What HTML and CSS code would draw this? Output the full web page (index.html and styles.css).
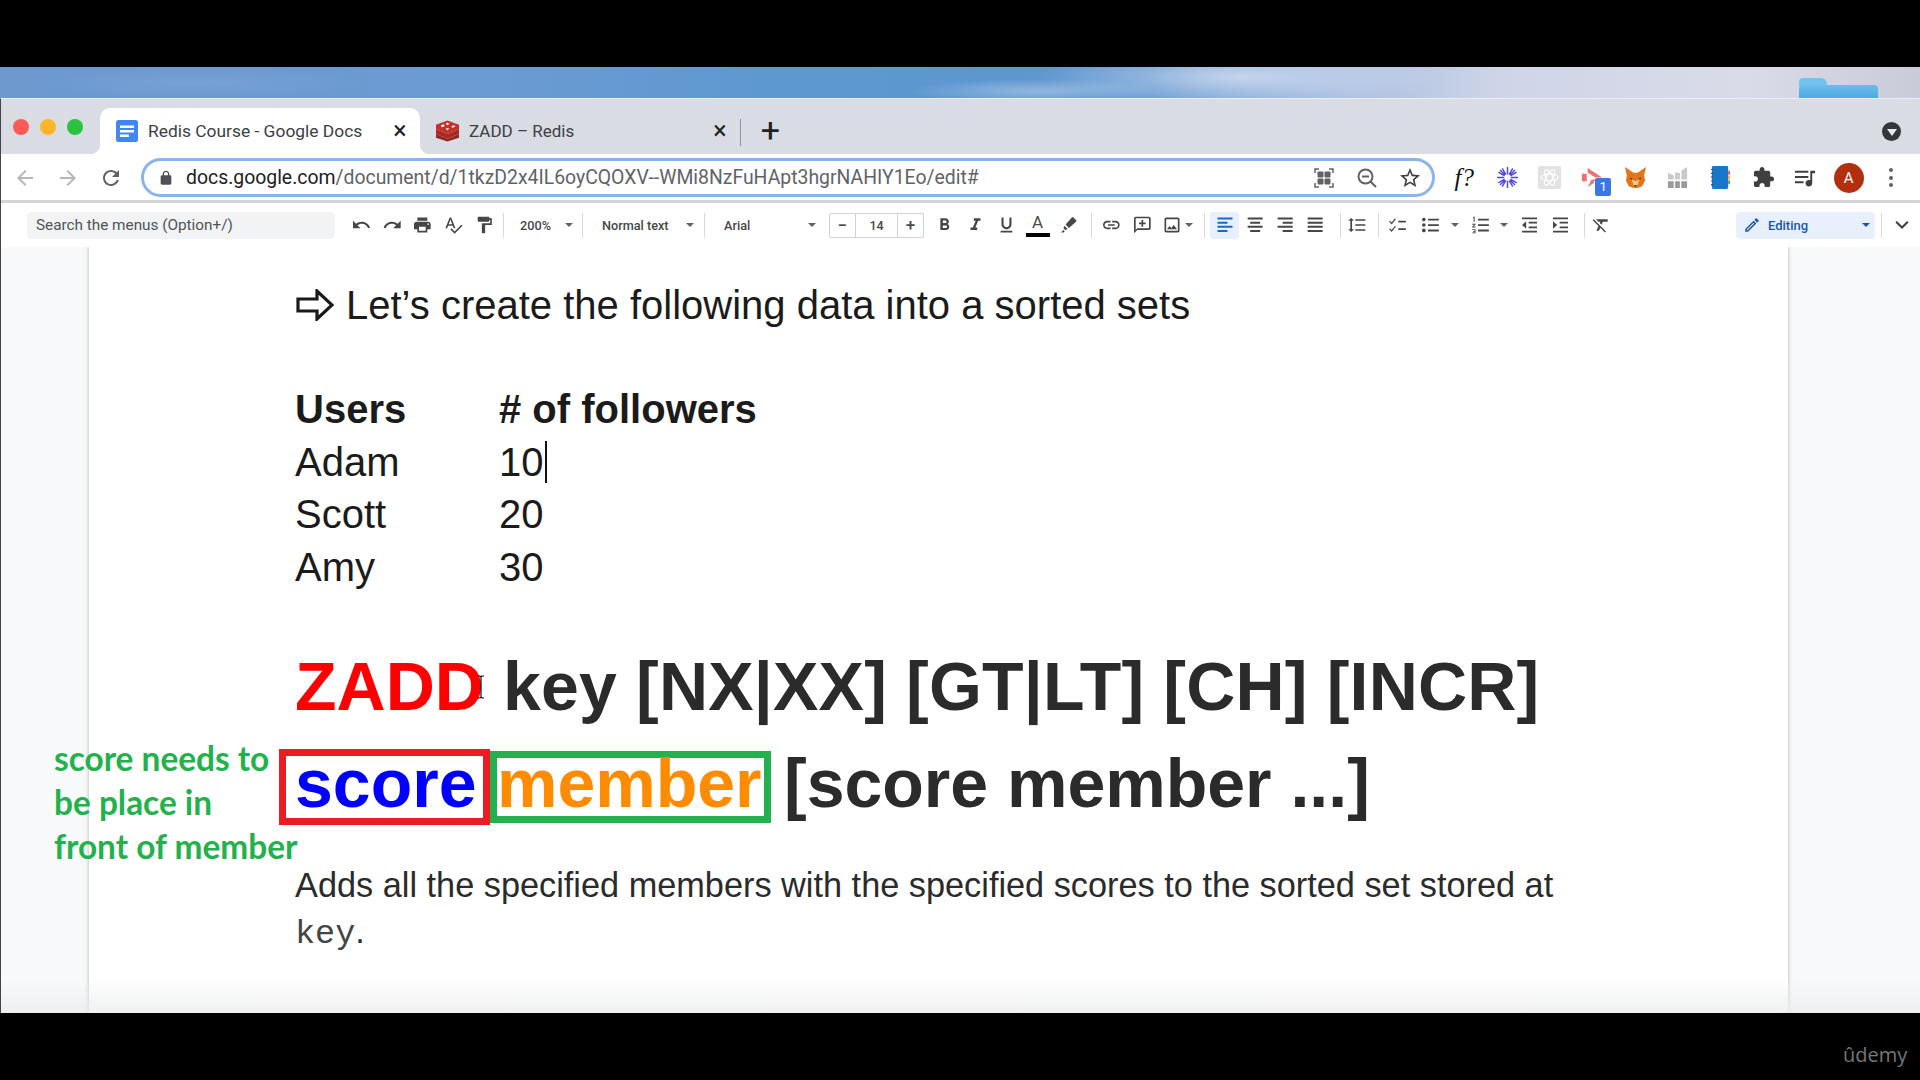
FILE: index.html
```html
<!DOCTYPE html>
<html>

<head>
    <meta charset="UTF-8">
    <title>Redis Course - Google Docs</title>
    <link rel="stylesheet" href="styles.css">
</head>

<body>
    <svg class="defs" width="0" height="0">
        <symbol id="i-back" viewBox="0 0 24 24"><path d="M20 11H7.83l5.59-5.59L12 4l-8 8 8 8 1.41-1.41L7.83 13H20v-2z"/></symbol>
        <symbol id="i-forward" viewBox="0 0 24 24"><path d="M4 11h12.17l-5.59-5.59L12 4l8 8-8 8-1.41-1.41L16.17 13H4v-2z"/></symbol>
        <symbol id="i-reload" viewBox="0 0 24 24"><path d="M17.65 6.35C16.2 4.9 14.21 4 12 4c-4.42 0-7.99 3.58-7.99 8s3.57 8 7.99 8c3.73 0 6.84-2.55 7.73-6h-2.08c-.82 2.33-3.04 4-5.65 4-3.31 0-6-2.69-6-6s2.69-6 6-6c1.66 0 3.14.69 4.22 1.78L13 11h7V4l-2.35 2.35z"/></symbol>
        <symbol id="i-lock" viewBox="0 0 24 24"><path d="M18 8h-1V6c0-2.76-2.24-5-5-5S7 3.24 7 6v2H6c-1.1 0-2 .9-2 2v10c0 1.1.9 2 2 2h12c1.1 0 2-.9 2-2V10c0-1.1-.9-2-2-2zM9 6c0-1.66 1.34-3 3-3s3 1.34 3 3v2H9V6z"/></symbol>
        <symbol id="i-star" viewBox="0 0 24 24"><path d="M22 9.24l-7.19-.62L12 2 9.19 8.63 2 9.24l5.46 4.73L5.82 21 12 17.27 18.18 21l-1.63-7.03L22 9.24zM12 15.4l-3.76 2.27 1-4.28-3.32-2.88 4.38-.38L12 6.1l1.71 4.04 4.38.38-3.32 2.88 1 4.28L12 15.4z"/></symbol>
        <symbol id="i-undo" viewBox="0 0 24 24"><path d="M12.5 8c-2.65 0-5.05.99-6.9 2.6L2 7v9h9l-3.62-3.62c1.39-1.16 3.16-1.88 5.12-1.88 3.54 0 6.55 2.31 7.6 5.5l2.37-.78C21.08 11.03 17.15 8 12.5 8z"/></symbol>
        <symbol id="i-redo" viewBox="0 0 24 24"><path d="M18.4 10.6C16.55 8.99 14.15 8 11.5 8c-4.65 0-8.58 3.03-9.96 7.22L3.9 16c1.05-3.19 4.05-5.5 7.6-5.5 1.95 0 3.73.72 5.12 1.88L13 16h9V7l-3.6 3.6z"/></symbol>
        <symbol id="i-print" viewBox="0 0 24 24"><path d="M19 8H5c-1.66 0-3 1.34-3 3v6h4v4h12v-4h4v-6c0-1.66-1.34-3-3-3zm-3 11H8v-5h8v5zm3-7c-.55 0-1-.45-1-1s.45-1 1-1 1 .45 1 1-.45 1-1 1zm-1-9H6v4h12V3z"/></symbol>
        <symbol id="i-spell" viewBox="0 0 24 24"><path d="M12.45 16h2.09L9.43 3H7.57L2.46 16h2.09l1.12-3h5.64l1.14 3zm-6.02-5L8.5 5.48 10.57 11H6.43zm15.16.59l-8.09 8.09L9.83 16l-1.41 1.41 5.09 5.09L23 13l-1.41-1.41z"/></symbol>
        <symbol id="i-paint" viewBox="0 0 24 24"><path d="M18 4V3c0-.55-.45-1-1-1H5c-.55 0-1 .45-1 1v4c0 .55.45 1 1 1h12c.55 0 1-.45 1-1V6h1v4H9v11c0 .55.45 1 1 1h2c.55 0 1-.45 1-1v-9h8V4h-3z"/></symbol>
        <symbol id="i-bold" viewBox="0 0 24 24"><path d="M15.6 10.79c.97-.67 1.65-1.77 1.65-2.79 0-2.26-1.75-4-4-4H7v14h7.04c2.09 0 3.71-1.7 3.71-3.79 0-1.52-.86-2.82-2.15-3.42zM10 6.5h3c.83 0 1.5.67 1.5 1.5s-.67 1.5-1.5 1.5h-3v-3zm3.5 9H10v-3h3.5c.83 0 1.5.67 1.5 1.5s-.67 1.5-1.5 1.5z"/></symbol>
        <symbol id="i-italic" viewBox="0 0 24 24"><path d="M10 4v3h2.21l-3.42 8H6v3h8v-3h-2.21l3.42-8H18V4z"/></symbol>
        <symbol id="i-underline" viewBox="0 0 24 24"><path d="M12 17c3.31 0 6-2.69 6-6V3h-2.5v8c0 1.93-1.57 3.5-3.5 3.5S8.5 12.93 8.5 11V3H6v8c0 3.31 2.69 6 6 6zm-7 2v2h14v-2H5z"/></symbol>
        <symbol id="i-pen" viewBox="0 0 24 24"><path d="M3 21l3-3 1.500 1.500-1.500 1.500zM7 13l4 4-3 1-2-2zM8.500 11.500L16 3c.6-.6 1.400-.6 2 0l3 3c.6.6.6 1.400 0 2l-8.500 7.500z"/></symbol>
        <symbol id="i-edit" viewBox="0 0 24 24"><path d="M3 17.25V21h3.75L17.81 9.94l-3.75-3.75L3 17.25zM5.9 19H5v-.9l9.06-9.06.9.9L5.9 19zM20.71 7.04c.39-.39.39-1.02 0-1.41l-2.34-2.34c-.39-.39-1.02-.39-1.41 0l-1.83 1.83 3.75 3.75 1.83-1.83z"/></symbol>
        <symbol id="i-link" viewBox="0 0 24 24"><path d="M3.9 12c0-1.71 1.39-3.1 3.1-3.1h4V7H7c-2.76 0-5 2.24-5 5s2.24 5 5 5h4v-1.9H7c-1.71 0-3.1-1.39-3.1-3.1zM8 13h8v-2H8v2zm9-6h-4v1.9h4c1.71 0 3.1 1.39 3.1 3.1s-1.39 3.1-3.1 3.1h-4V17h4c2.76 0 5-2.24 5-5s-2.24-5-5-5z"/></symbol>
        <symbol id="i-comment" viewBox="0 0 24 24"><path d="M20 2H4c-1.1 0-2 .9-2 2v18l4-4h14c1.1 0 2-.9 2-2V4c0-1.1-.9-2-2-2zm0 14H6l-2 2V4h16v12zM11 6h2v3h3v2h-3v3h-2v-3H8V9h3z"/></symbol>
        <symbol id="i-image" viewBox="0 0 24 24"><path d="M19 5v14H5V5h14m0-2H5c-1.1 0-2 .9-2 2v14c0 1.1.9 2 2 2h14c1.1 0 2-.9 2-2V5c0-1.1-.9-2-2-2zm-4.86 8.86l-3 3.87L9 13.14 6 17h12l-3.86-5.14z"/></symbol>
        <symbol id="i-left" viewBox="0 0 24 24"><path d="M3 3h18v2.4H3zM3 8h12v2.4H3zM3 13h18v2.4H3zM3 18h12v2.4H3z"/></symbol>
        <symbol id="i-center" viewBox="0 0 24 24"><path d="M3 3h18v2.4H3zM6 8h12v2.4H6zM3 13h18v2.4H3zM6 18h12v2.4H6z"/></symbol>
        <symbol id="i-right" viewBox="0 0 24 24"><path d="M3 3h18v2.4H3zM9 8h12v2.4H9zM3 13h18v2.4H3zM9 18h12v2.4H9z"/></symbol>
        <symbol id="i-justify" viewBox="0 0 24 24"><path d="M3 3h18v2.4H3zM3 8h18v2.4H3zM3 13h18v2.4H3zM3 18h18v2.4H3z"/></symbol>
        <symbol id="i-spacing" viewBox="0 0 24 24"><path d="M6 7h2.5L5 3.5 1.5 7H4v10H1.5L5 20.5 8.5 17H6V7zm4-2v2h12V5H10zm0 14h12v-2H10v2zm0-6h12v-2H10v2z"/></symbol>
        <symbol id="i-check" viewBox="0 0 24 24"><path d="M3 7l2 2 4-5 1 1-5 6.500L2 8zM3 16l2 2 4-5 1 1-5 6.500L2 17zM13 7h9v2h-9zM13 16h9v2h-9z"/></symbol>
        <symbol id="i-bullets" viewBox="0 0 24 24"><circle cx="4" cy="5.500" r="2.200"/><circle cx="4" cy="12" r="2.200"/><circle cx="4" cy="18.500" r="2.200"/><path d="M9 4.500h13v2.200H9zM9 11h13v2.200H9zM9 17.500h13v2.200H9z"/></symbol>
        <symbol id="i-numbers" viewBox="0 0 24 24"><path d="M9 4.500h13v2.200H9zM9 11h13v2.200H9zM9 17.500h13v2.200H9zM3 2h2v6H3.800V3.200H3zM2 10.500h4v1l-2.400 2.300H6V15H2v-1l2.400-2.300H2zM2 17h4v5H2v-1h2.800v-1H3v-.900h1.800v-1H2z"/></symbol>
        <symbol id="i-outdent" viewBox="0 0 24 24"><path d="M3 3h18v2.200H3zM3 18.800h18V21H3zM11 8h10v2.200H11zM11 13.800h10V16H11zM8 7.500v9L3 12z"/></symbol>
        <symbol id="i-indent" viewBox="0 0 24 24"><path d="M3 3h18v2.200H3zM3 18.800h18V21H3zM11 8h10v2.200H11zM11 13.800h10V16H11zM3 7.500v9L8 12z"/></symbol>
        <symbol id="i-clear" viewBox="0 0 24 24"><path d="M3.270 5L2 6.270l6.970 6.970L6.500 19h3l1.570-3.660L16.730 21 18 19.730 3.550 5.270 3.270 5zM6 5v.18L8.820 8h2.400l-.72 1.680 2.100 2.100L14.210 8H20V5H6z"/></symbol>
        <symbol id="i-puzzle" viewBox="0 0 24 24"><path d="M20.500 11H19V7c0-1.100-.9-2-2-2h-4V3.500C13 2.120 11.880 1 10.500 1S8 2.120 8 3.500V5H4c-1.100 0-1.990.9-1.990 2v3.800H3.500c1.490 0 2.700 1.210 2.700 2.700s-1.210 2.700-2.700 2.700H2V20c0 1.100.9 2 2 2h3.800v-1.500c0-1.490 1.210-2.700 2.700-2.700 1.490 0 2.700 1.210 2.700 2.700V22H17c1.100 0 2-.9 2-2v-4h1.500c1.380 0 2.500-1.120 2.500-2.500S21.880 11 20.500 11z"/></symbol>
    </svg>

    <div class="bar-top"></div>

    <div class="desktop">
        <div class="folder"></div>
    </div>

    <div class="browser">
        <div class="tabstrip">
            <div class="lights">
                <span class="light red"></span>
                <span class="light yellow"></span>
                <span class="light green"></span>
            </div>
            <div class="tab active">
                <svg class="favicon" viewBox="0 0 22 22"><rect x="0" y="0" width="22" height="22" rx="2.500" fill="#4285f4"/><path d="M4 5.500h14v2.500H4zM4 10h14v2.500H4zM4 14.500h9V17H4z" fill="#fff"/></svg>
                <span class="tab-title">Redis Course - Google Docs</span>
                <span class="tab-x">×</span>
            </div>
            <div class="tab">
                <svg class="favicon redis" viewBox="0 0 24 22"><path d="M0 14l12 5 12-5v4l-12 4-12-4z" fill="#912626"/><path d="M0 9l12 5 12-5v5l-12 5-12-5z" fill="#a82a25"/><path d="M0 4.500L12 0l12 4.500V9l-12 5L0 9z" fill="#c6302b"/><path d="M12 2l2 1.500-2 1.500-2-1.500zM5 5l3-1 1 2-3 1zM16 6l3-1 1 1.500-3 1zM10 8h4l-2 2.500z" fill="#fff"/></svg>
                <span class="tab-title">ZADD – Redis</span>
                <span class="tab-x">×</span>
            </div>
            <span class="tab-sep"></span>
            <span class="new-tab">+</span>
            <span class="tab-menu"><i></i></span>
        </div>

        <div class="addressbar">
            <svg class="nav dim"><use href="#i-back"/></svg>
            <svg class="nav dim"><use href="#i-forward"/></svg>
            <svg class="nav"><use href="#i-reload"/></svg>
            <div class="omnibox">
                <svg class="lock"><use href="#i-lock"/></svg>
                <span class="url"><b>docs.google.com</b>/document/d/1tkzD2x4IL6oyCQOXV--WMi8NzFuHApt3hgrNAHIY1Eo/edit#</span>
                <div class="omni-icons">
                    <svg class="omni-icon" viewBox="0 0 24 24"><path d="M3 7V3h4M17 3h4v4M21 17v4h-4M7 21H3v-4" fill="none" stroke="#5f6368" stroke-width="1.500"/><rect x="5.500" y="5.500" width="6" height="6" rx="1" fill="#5f6368"/><rect x="12.500" y="5.500" width="6" height="6" rx="1" fill="#5f6368"/><rect x="5.500" y="12.500" width="6" height="6" rx="1" fill="#5f6368"/><rect x="12.500" y="12.500" width="6" height="6" rx="1" fill="#5f6368"/></svg>
                    <svg class="omni-icon" viewBox="0 0 24 24"><circle cx="10.500" cy="10.500" r="7" fill="none" stroke="#5f6368" stroke-width="2"/><path d="M7 10.500h7M15.500 15.500L21 21" stroke="#5f6368" stroke-width="2"/></svg>
                    <svg class="omni-icon"><use href="#i-star"/></svg>
                </div>
            </div>
            <div class="extensions">
                <span class="ext fx">f?</span>
                <span class="ext">
                    <svg viewBox="0 0 24 24"><g stroke="#4f46e5" stroke-width="1.500"><path d="M12 1v22M1 12h22M4.200 4.200l15.600 15.600M19.800 4.200L4.200 19.800M6.500 2.500l11 19M17.500 2.500l-11 19M2.500 6.500l19 11M21.500 6.500l-19 11"/></g><circle cx="12" cy="12" r="3.500" fill="#fff"/></svg>
                </span>
                <span class="ext">
                    <svg viewBox="0 0 24 24"><rect width="24" height="24" rx="2" fill="#e2e2e2"/><g fill="none" stroke="#fff" stroke-width="1.100"><ellipse cx="12" cy="12" rx="9" ry="3.500"/><ellipse cx="12" cy="12" rx="9" ry="3.500" transform="rotate(60 12 12)"/><ellipse cx="12" cy="12" rx="9" ry="3.500" transform="rotate(120 12 12)"/></g></svg>
                </span>
                <span class="ext">
                    <svg viewBox="0 0 24 24"><path d="M1 8h5v8H1zM7 2l15 10h-7L7 7zM7 22l4-8h4l-2 4z" fill="#f07070"/></svg>
                    <span class="ext-badge">1</span>
                </span>
                <span class="ext">
                    <svg viewBox="0 0 24 24"><path d="M1 1l9 6h4l9-6-2 9 1 5-3 6-5 2h-4l-5-2-3-6 1-5z" fill="#e2761b"/><path d="M8 14l4 2 4-2-2 6h-4z" fill="#f6c79a"/><path d="M6 12l3 1-2 1zM18 12l-3 1 2 1zM10.500 20h3l-1.500 2z" fill="#233447"/></svg>
                </span>
                <span class="ext">
                    <svg viewBox="0 0 24 24"><path d="M2 16h6v7H2zM9.500 16h5v7h-5zM16 16h6v7h-6z" fill="#9a9a9a"/><path d="M2 7l6 3v4H2zM9.500 7h5v7h-5zM16 5l6-4v13h-6z" fill="#c9c9c9"/></svg>
                </span>
                <span class="ext">
                    <svg viewBox="0 0 24 24"><rect x="3" y="0" width="17" height="24" rx="1.500" fill="#1976c8"/><path d="M20 5h2v4h-2z" fill="#e85d4a"/><path d="M20 10h2v4h-2z" fill="#f2b134"/><path d="M20 15h2v4h-2z" fill="#4caf50"/><path d="M2 3h2v1H2zM2 7h2v1H2zM2 11h2v1H2zM2 15h2v1H2zM2 19h2v1H2z" fill="#333"/></svg>
                </span>
                <span class="ext"><svg class="puzzle"><use href="#i-puzzle"/></svg></span>
                <span class="ext">
                    <svg viewBox="0 0 24 24"><path d="M1 5h14v2H1zM1 10.500h14v2H1zM1 16h9v2H1z" fill="#3c4043"/><path d="M17 5h5v2.500h-3V18a3.500 3.500 0 1 1-2-3.200z" fill="#3c4043"/></svg>
                </span>
                <span class="ext"><span class="avatar">A</span></span>
                <span class="ext"><span class="dots"><i></i><i></i><i></i></span></span>
            </div>
        </div>

        <div class="toolbar">
            <div class="menu-search">Search the menus (Option+/)</div>
            <div class="tools first">
                <svg class="ic"><use href="#i-undo"/></svg>
                <svg class="ic"><use href="#i-redo"/></svg>
                <svg class="ic"><use href="#i-print"/></svg>
                <svg class="ic"><use href="#i-spell"/></svg>
                <svg class="ic"><use href="#i-paint"/></svg>
            </div>
            <span class="sep s3"></span>
            <div class="dd dd-zoom">200%<i class="caret"></i></div>
            <span class="sep s9"></span>
            <div class="dd dd-wide">Normal text<i class="caret"></i></div>
            <span class="sep s10"></span>
            <div class="dd dd-wide">Arial<i class="caret"></i></div>
            <div class="sizebox">
                <span class="size-btn">−</span>
                <span class="size-val">14</span>
                <span class="size-btn">+</span>
            </div>
            <div class="tools format">
                <svg class="ic"><use href="#i-bold"/></svg>
                <svg class="ic"><use href="#i-italic"/></svg>
                <svg class="ic"><use href="#i-underline"/></svg>
                <span class="ic text-color">A<i></i></span>
                <svg class="ic"><use href="#i-pen"/></svg>
            </div>
            <span class="sep s7"></span>
            <div class="tools insert">
                <svg class="ic"><use href="#i-link"/></svg>
                <svg class="ic"><use href="#i-comment"/></svg>
                <svg class="ic narrow"><use href="#i-image"/></svg>
                <i class="caret"></i>
            </div>
            <span class="sep s8"></span>
            <div class="tools align">
                <span class="ic on"><svg><use href="#i-left"/></svg></span>
                <svg class="ic"><use href="#i-center"/></svg>
                <svg class="ic"><use href="#i-right"/></svg>
                <svg class="ic"><use href="#i-justify"/></svg>
            </div>
            <span class="sep s5"></span>
            <svg class="ic spacing"><use href="#i-spacing"/></svg>
            <span class="sep s6"></span>
            <div class="tools lists">
                <svg class="ic"><use href="#i-check"/></svg>
                <svg class="ic"><use href="#i-bullets"/></svg>
                <i class="caret"></i>
                <svg class="ic"><use href="#i-numbers"/></svg>
                <i class="caret"></i>
                <svg class="ic"><use href="#i-outdent"/></svg>
                <svg class="ic"><use href="#i-indent"/></svg>
            </div>
            <span class="sep s8"></span>
            <svg class="ic spacing"><use href="#i-clear"/></svg>
            <div class="editing">
                <svg><use href="#i-edit"/></svg>
                <span>Editing</span>
                <i class="caret blue"></i>
            </div>
            <span class="sep s6"></span>
            <svg class="collapse" viewBox="0 0 24 24"><path d="M5 8l7 7 7-7" fill="none" stroke="#3c4043" stroke-width="2.500"/></svg>
        </div>

        <div class="workspace">
            <div class="page">
                <div class="line-lead">
                    <svg class="lead-arrow" viewBox="0 0 38 32"><path d="M2 10h19V2l15 14-15 14v-8H2z" fill="none" stroke="#1a1a1a" stroke-width="3.200"/></svg>
                    <span>Let’s create the following data into a sorted sets</span>
                </div>

                <div class="data">
                    <b>Users</b><b># of followers</b>
                    <span>Adam</span><span>10<i class="text-cursor"></i></span>
                    <span>Scott</span><span>20</span>
                    <span>Amy</span><span>30</span>
                </div>

                <div class="syntax syntax-one"><span class="c-red">ZADD</span> key [NX|XX] [GT|LT] [CH] [INCR]</div>

                <div class="syntax syntax-two">
                    <span class="box box-red">score</span>
                    <span class="box box-green">member</span>
                    <span class="rest">[score member ...]</span>
                </div>

                <p class="desc">Adds all the specified members with the specified scores to the sorted set stored at</p>
                <p class="desc"><code>key</code>.</p>

                <svg class="ibeam" viewBox="0 0 10 24"><path d="M2 1h2l1 1 1-1h2M5 2v20M2 23h2l1-1 1 1h2" fill="none" stroke="#111" stroke-width="1.200"/></svg>
            </div>
            <div class="note">score needs to<br>be place in<br>front of member</div>
            <div class="fade"></div>
        </div>
    </div>

    <div class="bar-bottom">
        <span class="udemy">ûdemy</span>
    </div>
</body>

</html>
```

FILE: styles.css
```css
* {
    box-sizing: border-box;
}

html, body {
    margin: 0;
    height: 100%;
}

body {
    width: 1920px;
    height: 1080px;
    overflow: hidden;
    background: #000;
    display: flex;
    flex-direction: column;
    font-family: Roboto, "Liberation Sans", sans-serif;
}

.defs {
    position: absolute;
}

.bar-top {
    height: 67px;
    flex: none;
}

.desktop {
    height: 31px;
    flex: none;
    position: relative;
    background:
        radial-gradient(ellipse 130px 12px at 1040px 24px, rgba(190, 210, 235, .55), transparent),
        radial-gradient(ellipse 200px 30px at 1240px 10px, rgba(225, 230, 245, .7), transparent),
        radial-gradient(ellipse 160px 14px at 200px 16px, rgba(130, 165, 215, .6), transparent),
        linear-gradient(90deg, #6d99cf 0, #6a9bd2 500px, #5d98d1 800px, #5f96cf 1150px, #a9bfe0 1350px, #cfd5e8 1500px, #d9dbe8 1750px, #c9cbd8 1920px);
}

.folder {
    position: absolute;
    left: 1799px;
    top: 18px;
    width: 79px;
    height: 13px;
    border-radius: 4px 4px 0 0;
    background: linear-gradient(#6cbdec, #4ea9e0);
}

.folder::before {
    content: "";
    position: absolute;
    left: 0;
    top: -7px;
    width: 28px;
    height: 8px;
    border-radius: 4px 6px 0 0;
    background: #71c3ee;
}

.browser {
    flex: none;
    height: 915px;
    display: flex;
    flex-direction: column;
    border-left: 1px solid #444;
    border-top: 1px solid #eceef2;
    background: #fff;
}

/* tabs */
.tabstrip {
    height: 55px;
    flex: none;
    display: flex;
    align-items: flex-end;
    background: #d9dce3;
    position: relative;
}

.lights {
    display: flex;
    gap: 11px;
    width: 99px;
    padding-left: 12px;
    align-self: flex-start;
    padding-top: 20px;
}

.light {
    width: 16px;
    height: 16px;
    border-radius: 50%;
}

.red { background: #fb5b57; }
.yellow { background: #fdb629; }
.green { background: #29c33f; }

.tab {
    width: 320px;
    height: 46px;
    display: flex;
    align-items: center;
    padding: 0 0 0 16px;
    font-size: 17px;
    color: #3c4043;
    position: relative;
    border-radius: 10px 10px 0 0;
}

.tab.active {
    background: #fff;
    font-size: 17.400px;
}

.tab.active::before,
.tab.active::after {
    content: "";
    position: absolute;
    bottom: 0;
    width: 10px;
    height: 10px;
}

.tab.active::before {
    left: -10px;
    background: radial-gradient(circle at 0 0, transparent 10px, #fff 10.5px);
}

.tab.active::after {
    right: -10px;
    background: radial-gradient(circle at 100% 0, transparent 10px, #fff 10.500px);
}

.favicon {
    width: 22px;
    height: 22px;
    flex: none;
}

.favicon.redis {
    width: 23px;
}

.tab-title {
    margin-left: 10px;
    white-space: nowrap;
    flex: 1;
}

.tab-x {
    width: 20px;
    margin-right: 10px;
    text-align: center;
    font-size: 25px;
    line-height: 20px;
    color: #202124;
}

.tab-sep {
    width: 1px;
    height: 27px;
    background: #8d9096;
    align-self: flex-start;
    margin-top: 20px;
}

.new-tab {
    margin-left: 19px;
    align-self: flex-start;
    margin-top: 13px;
    font-size: 34px;
    line-height: 36px;
    color: #202124;
    width: 21px;
    text-align: center;
}

.tab-menu {
    position: absolute;
    left: 1881px;
    top: 23px;
    width: 19px;
    height: 19px;
    border-radius: 50%;
    background: #33363b;
    display: flex;
    align-items: center;
    justify-content: center;
}

.tab-menu i {
    border-left: 5px solid transparent;
    border-right: 5px solid transparent;
    border-top: 7px solid #e8eaed;
    margin-top: 2px;
}

/* address bar */
.addressbar {
    height: 49px;
    flex: none;
    display: flex;
    align-items: center;
    padding: 1px 0 0 12px;
    background: #fff;
    border-bottom: 3px solid #d6d6dc;
}

.nav {
    width: 24px;
    height: 24px;
    margin-right: 19px;
    fill: #5f6368;
    flex: none;
}

.nav.dim {
    fill: #b4b7bb;
}

.nav:nth-child(3) {
    margin-right: 18px;
}

.omnibox {
    width: 1294px;
    height: 39px;
    flex: none;
    display: flex;
    align-items: center;
    border: 3px solid #8ab4ec;
    border-radius: 20px;
    padding-left: 14px;
}

.lock {
    width: 16px;
    height: 16px;
    fill: #4d5156;
    flex: none;
}

.url {
    margin-left: 12px;
    font-size: 19.400px;
    color: #5f6368;
    white-space: nowrap;
}

.url b {
    font-weight: 400;
    color: #202124;
}

.omni-icons {
    margin-left: auto;
    display: flex;
    gap: 19px;
    padding-right: 10px;
}

.omni-icon {
    width: 24px;
    height: 24px;
    fill: #3c4043;
}

.extensions {
    display: flex;
    margin-left: 8px;
}

.ext {
    width: 42.700px;
    height: 32px;
    display: flex;
    align-items: center;
    justify-content: center;
    position: relative;
}

.ext svg {
    width: 23px;
    height: 23px;
}

.ext .puzzle {
    fill: #3c4043;
}

.fx {
    font-family: "Liberation Serif", serif;
    font-style: italic;
    font-size: 25px;
    color: #111;
}

.ext-badge {
    position: absolute;
    left: 24px;
    top: 16px;
    width: 16px;
    height: 18px;
    border-radius: 2px;
    background: #3b78e7;
    color: #fff;
    font-size: 13px;
    line-height: 18px;
    text-align: center;
}

.avatar {
    width: 30px;
    height: 30px;
    border-radius: 50%;
    background: #b0300f;
    color: #fff;
    font-size: 15px;
    line-height: 30px;
    text-align: center;
}

.dots {
    display: flex;
    flex-direction: column;
    gap: 3.500px;
}

.dots i {
    width: 4px;
    height: 4px;
    border-radius: 50%;
    background: #5f6368;
}

/* docs toolbar */
.toolbar {
    height: 44px;
    flex: none;
    display: flex;
    align-items: center;
    padding-left: 26px;
    background: #fff;
    box-shadow: 0 2px 4px rgba(60, 64, 67, .25);
    position: relative;
    color: #444746;
}

.menu-search {
    width: 308px;
    height: 27px;
    flex: none;
    background: #f1f3f4;
    border-radius: 5px;
    padding-left: 9px;
    font-size: 15.300px;
    line-height: 27px;
    color: #505357;
}

.tools {
    display: flex;
    align-items: center;
    flex: none;
}

.tools.first {
    margin-left: 11px;
    width: 154px;
}

.ic {
    width: 30.700px;
    height: 20px;
    fill: #444649;
    flex: none;
}

.sep {
    width: 1px;
    height: 25px;
    background: #d8dadc;
    flex: none;
}

.s3 { margin-left: 3px; }
.s5 { margin-left: 5px; }
.s6 { margin-left: 6px; }
.s7 { margin-left: 7px; }
.s8 { margin-left: 8px; }
.s9 { margin-left: 9px; }
.s10 { margin-left: 10px; }

.dd {
    display: flex;
    align-items: center;
    justify-content: space-between;
    font-size: 12.700px;
    font-weight: 500;
    color: #444746;
    margin-left: 19px;
    flex: none;
}

.dd-zoom {
    width: 53px;
    margin-left: 16px;
}

.dd-wide {
    width: 92px;
}

.caret {
    width: 0;
    height: 0;
    flex: none;
    border-left: 4px solid transparent;
    border-right: 4px solid transparent;
    border-top: 4.500px solid #5f6368;
}

.sizebox {
    width: 95px;
    height: 25px;
    margin-left: 13px;
    flex: none;
    display: flex;
    border: 1px solid #d0d2d4;
    border-radius: 2px;
    font-size: 12.500px;
    font-weight: 500;
    line-height: 23px;
    text-align: center;
}

.size-btn {
    width: 25px;
    font-size: 17px;
    color: #4a4d50;
}

.size-val {
    flex: 1;
    border-left: 1px solid #d0d2d4;
    border-right: 1px solid #d0d2d4;
}

.tools.format {
    margin-left: 5px;
    width: 155px;
}

.format .ic {
    width: 31px;
}

.text-color {
    display: flex;
    flex-direction: column;
    align-items: center;
    height: 26px;
    font-size: 17px;
    line-height: 21px;
    color: #4a4d50;
}

.text-color i {
    width: 24px;
    height: 4px;
    background: #000;
    flex: none;
}

.tools.insert {
    margin-left: 4px;
    width: 100px;
}

.ic.narrow {
    width: 30px;
}

.insert .caret {
    margin-left: -2px;
}

.tools.align {
    margin-left: 5px;
    width: 125px;
}

.align .ic {
    width: 30.300px;
}

.align .ic.on {
    height: 27px;
    width: 29px;
    margin-right: .800px;
    background: #e8f0fe;
    border-radius: 3px;
    display: flex;
    align-items: center;
    justify-content: center;
}

.ic.on svg {
    width: 20px;
    height: 20px;
    fill: #1a66d6;
}

.ic.spacing {
    width: 30px;
    margin-left: 1px;
}

.tools.lists {
    margin-left: 2px;
    width: 195px;
}

.lists .ic {
    width: 31px;
}

.lists .ic:first-child,
.lists .ic:nth-child(2) {
    width: 33px;
}

.lists .caret {
    margin: 0 6px 0 4px;
}

.editing {
    margin-left: 120px;
    width: 139px;
    height: 27px;
    flex: none;
    display: flex;
    align-items: center;
    background: #e8f0fe;
    border-radius: 4px;
    padding: 0 5px 0 7px;
    font-size: 13px;
    font-weight: 500;
    color: #1a56b0;
}

.editing svg {
    width: 18px;
    height: 18px;
    fill: #1a56b0;
    margin-right: 7px;
}

.caret.blue {
    margin-left: auto;
    border-top-color: #1a56b0;
}

.collapse {
    width: 20px;
    height: 20px;
    margin-left: 10px;
    flex: none;
}

/* document */
.workspace {
    flex: 1;
    position: relative;
    background: #f8f9fb;
    overflow: hidden;
    min-height: 0;
}

.page {
    width: 1699px;
    height: 100%;
    margin-left: 88px;
    padding: 28px 0 0 206px;
    background: #fff;
    box-shadow: 0 0 4px rgba(60, 64, 67, .4);
    position: relative;
    font-family: "Liberation Sans", sans-serif;
    color: #1b1b1b;
}

.line-lead {
    display: flex;
    align-items: center;
    height: 60px;
    font-size: 40px;
}

.lead-arrow {
    width: 38px;
    height: 32px;
    margin: 0 12px 0 1px;
    flex: none;
}

.data {
    margin-top: 48px;
    display: grid;
    grid-template-columns: 204px auto;
    justify-content: start;
    grid-auto-rows: 52.700px;
    align-items: center;
    font-size: 40px;
}

.text-cursor {
    display: inline-block;
    width: 2px;
    height: 42px;
    margin-left: 1px;
    background: #111;
    vertical-align: -7px;
}

.syntax {
    font-size: 68px;
    font-weight: 700;
    color: #2b2b2b;
}

.syntax-one {
    margin-top: 50px;
    height: 84px;
    line-height: 84px;
    white-space: nowrap;
    letter-spacing: .2px;
}

.c-red {
    color: #ff0000;
    letter-spacing: 0;
}

.syntax-two {
    margin: 21px 0 0 -16px;
    display: flex;
    align-items: center;
    height: 76px;
    white-space: nowrap;
}

.box {
    display: block;
    border: 7px solid;
    line-height: 54px;
}

.box-red {
    width: 211px;
    height: 76px;
    padding-left: 9px;
    border-color: #ed1c24;
    color: #0000ff;
}

.box-green {
    width: 281px;
    height: 72px;
    padding-left: 0;
    border-color: #22b14c;
    color: #ff8c00;
    line-height: 50px;
}

.rest {
    margin-left: 13px;
    padding-bottom: 8px;
}

.desc {
    margin: 0;
    height: 46px;
    line-height: 47px;
    font-size: 34.300px;
    color: #2b2b2b;
    white-space: nowrap;
}

.syntax-two + .desc {
    margin-top: 37px;
}

code {
    font-family: "Liberation Mono", monospace;
    font-size: 33.500px;
    color: #444;
}

.ibeam {
    position: absolute;
    left: 387px;
    top: 428px;
    width: 10px;
    height: 24px;
}

.note {
    position: absolute;
    left: 53px;
    top: 489px;
    font-family: Lato, sans-serif;
    font-weight: 700;
    font-size: 33.400px;
    line-height: 44px;
    color: #22b14c;
    white-space: nowrap;
}

.fade {
    position: absolute;
    left: 0;
    right: 0;
    bottom: 0;
    height: 34px;
    background: linear-gradient(rgba(235, 236, 238, 0), rgba(235, 236, 238, .8));
}

.bar-bottom {
    flex: 1;
    position: relative;
}

.udemy {
    position: absolute;
    left: 1843px;
    top: 27px;
    font-family: "Open Sans", sans-serif;
    font-size: 20px;
    line-height: 30px;
    color: #777;
}
```
